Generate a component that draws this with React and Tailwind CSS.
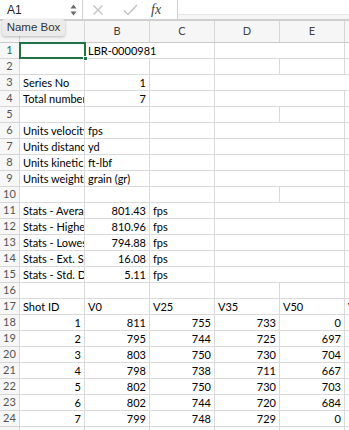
import React from "react";

const FONT = { fontFamily: "Lato, 'Liberation Sans', sans-serif" };

const N = (t) => ({ t, r: true });
const T = (t) => ({ t });
const E = (span = 1) => ({ t: "", span });

const rows = [
  [E(), { t: "LBR-0000981", span: 2 }, E(2), E()],
  [E(), E(), E(), E(), E(), E()],
  [T("Series No"), N("1"), E(), E(3)],
  [T("Total number of shots"), N("7"), E(), E(2), E()],
  [E(), E(), E(), E(), E(), E()],
  [T("Units velocity"), T("fps"), E(), E(2), E()],
  [T("Units distance"), T("yd"), E(), E(2), E()],
  [T("Units kinetic energy"), T("ft-lbf"), E(), E(2), E()],
  [T("Units weight"), T("grain (gr)"), E(), E(2), E()],
  [E(), E(), E(), E(), E(), E()],
  [T("Stats - Average"), N("801.43"), T("fps"), E(2), E()],
  [T("Stats - Highest"), N("810.96"), T("fps"), E(2), E()],
  [T("Stats - Lowest"), N("794.88"), T("fps"), E(2), E()],
  [T("Stats - Ext. Spread"), N("16.08"), T("fps"), E(2), E()],
  [T("Stats - Std. Dev"), N("5.11"), T("fps"), E(2), E()],
  [E(), E(), E(), E(), E(), E()],
  [T("Shot ID"), T("V0"), T("V25"), T("V35"), T("V50"), T("V75")],
  [N("1"), N("811"), N("755"), N("733"), N("0"), N("0")],
  [N("2"), N("795"), N("744"), N("725"), N("697"), N("0")],
  [N("3"), N("803"), N("750"), N("730"), N("704"), N("0")],
  [N("4"), N("798"), N("738"), N("711"), N("667"), N("0")],
  [N("5"), N("802"), N("750"), N("730"), N("703"), N("0")],
  [N("6"), N("802"), N("744"), N("720"), N("684"), N("0")],
  [N("7"), N("799"), N("748"), N("729"), N("0"), N("0")],
  [E(), E(), E(), E(), E(), E()],
];

function Cell({ c }) {
  const span = c.span || 1;
  return (
    <div
      className={
        "h-4 shrink-0 border-r border-b border-[#dadada] text-[11px] leading-[15px] text-black whitespace-nowrap overflow-hidden " +
        (c.r ? "text-right pr-[3px]" : "text-left pl-[3px]")
      }
      style={{ width: 65 * span }}
    >
      {c.t}
    </div>
  );
}

export default function App() {
  return (
    <div className="w-[349px] h-[430px] overflow-hidden bg-white relative" style={FONT}>
      {/* toolbar */}
      <div className="h-[19px] flex items-stretch bg-[#f4f4f4]">
        <div className="w-[83px] flex items-center justify-between pl-[7px] pr-[5px] bg-white border-r border-[#cfcfcf]">
          <span className="text-[12px] text-[#222]" style={{ fontFamily: "'Liberation Sans', sans-serif" }}>A1</span>
          <div className="flex flex-col items-center leading-none text-[#555]">
            <svg width="7" height="5" viewBox="0 0 7 5"><path d="M3.5 0.5 L6.5 4.5 L0.5 4.5 Z" fill="#6a6a6a" /></svg>
            <svg width="7" height="5" viewBox="0 0 7 5" className="mt-[2px]"><path d="M0.5 0.5 L6.5 0.5 L3.5 4.5 Z" fill="#6a6a6a" /></svg>
          </div>
        </div>
        <div className="w-[95px] flex items-center bg-white border-r border-[#d0d0d0]">
          <svg width="12" height="12" viewBox="0 0 12 12" className="ml-[9px]">
            <path d="M1.5 1.5 L10.5 10.5 M10.5 1.5 L1.5 10.5" stroke="#c3c3c3" strokeWidth="1.4" />
          </svg>
          <svg width="15" height="12" viewBox="0 0 15 12" className="ml-[19px]">
            <path d="M1 6.5 L5 10.5 L14 1" stroke="#c3c3c3" strokeWidth="1.4" fill="none" />
          </svg>
          <span className="ml-[13px] text-[14px] italic text-[#444]" style={{ fontFamily: "'Liberation Serif', serif" }}>fx</span>
        </div>
        <div className="flex-1 flex flex-col">
          <div className="h-[15px] bg-white border-b border-[#e6e6e6]" />
          <div className="flex-1 bg-[#f6f6f6]" />
        </div>
      </div>
      <div className="h-[2px] border-t border-b border-[#cfcfcf] bg-[#e9e9e9]" />

      {/* column header */}
      <div className="flex h-[22px] bg-[#f6f6f6] border-b border-[#c9c9c9]">
        <div className="w-[20px] shrink-0 border-r border-[#d0d0d0]" />
        {["A", "B", "C", "D", "E", "F"].map((l) => (
          <div
            key={l}
            className="w-[65px] shrink-0 border-r border-[#d6d6d6] flex items-center justify-center text-[11px] text-[#444]"
          >
            {l}
          </div>
        ))}
      </div>

      {/* rows */}
      <div className="flex flex-col">
        {rows.map((r, i) => (
          <div key={i} className="flex">
            <div
              className={
                "w-[20px] h-4 shrink-0 bg-[#f7f7f7] border-r border-b border-[#d6d6d6] flex items-center justify-center text-[11px] " +
                (i === 0 ? "text-[#217346]" : "text-[#555]")
              }
            >
              {i + 1}
            </div>
            {r.map((c, j) => (
              <Cell key={j} c={c} />
            ))}
          </div>
        ))}
      </div>

      {/* selection A1 */}
      <div className="absolute left-[19px] top-[42px] w-[67px] h-[17px] border-2 border-[#217346]" />
      <div className="absolute left-[83px] top-[56px] w-[5px] h-[5px] bg-[#217346] border border-white" />

      {/* tooltip */}
      <div
        className="absolute left-[2px] top-[19px] w-[63px] h-[17px] bg-[#ebebeb] rounded-[3px] shadow-[0_1px_3px_rgba(0,0,0,0.25)] flex items-center justify-center text-[11.5px] text-[#333]"
        style={{ fontFamily: "'Liberation Sans', sans-serif" }}
      >
        Name Box
      </div>
    </div>
  );
}
